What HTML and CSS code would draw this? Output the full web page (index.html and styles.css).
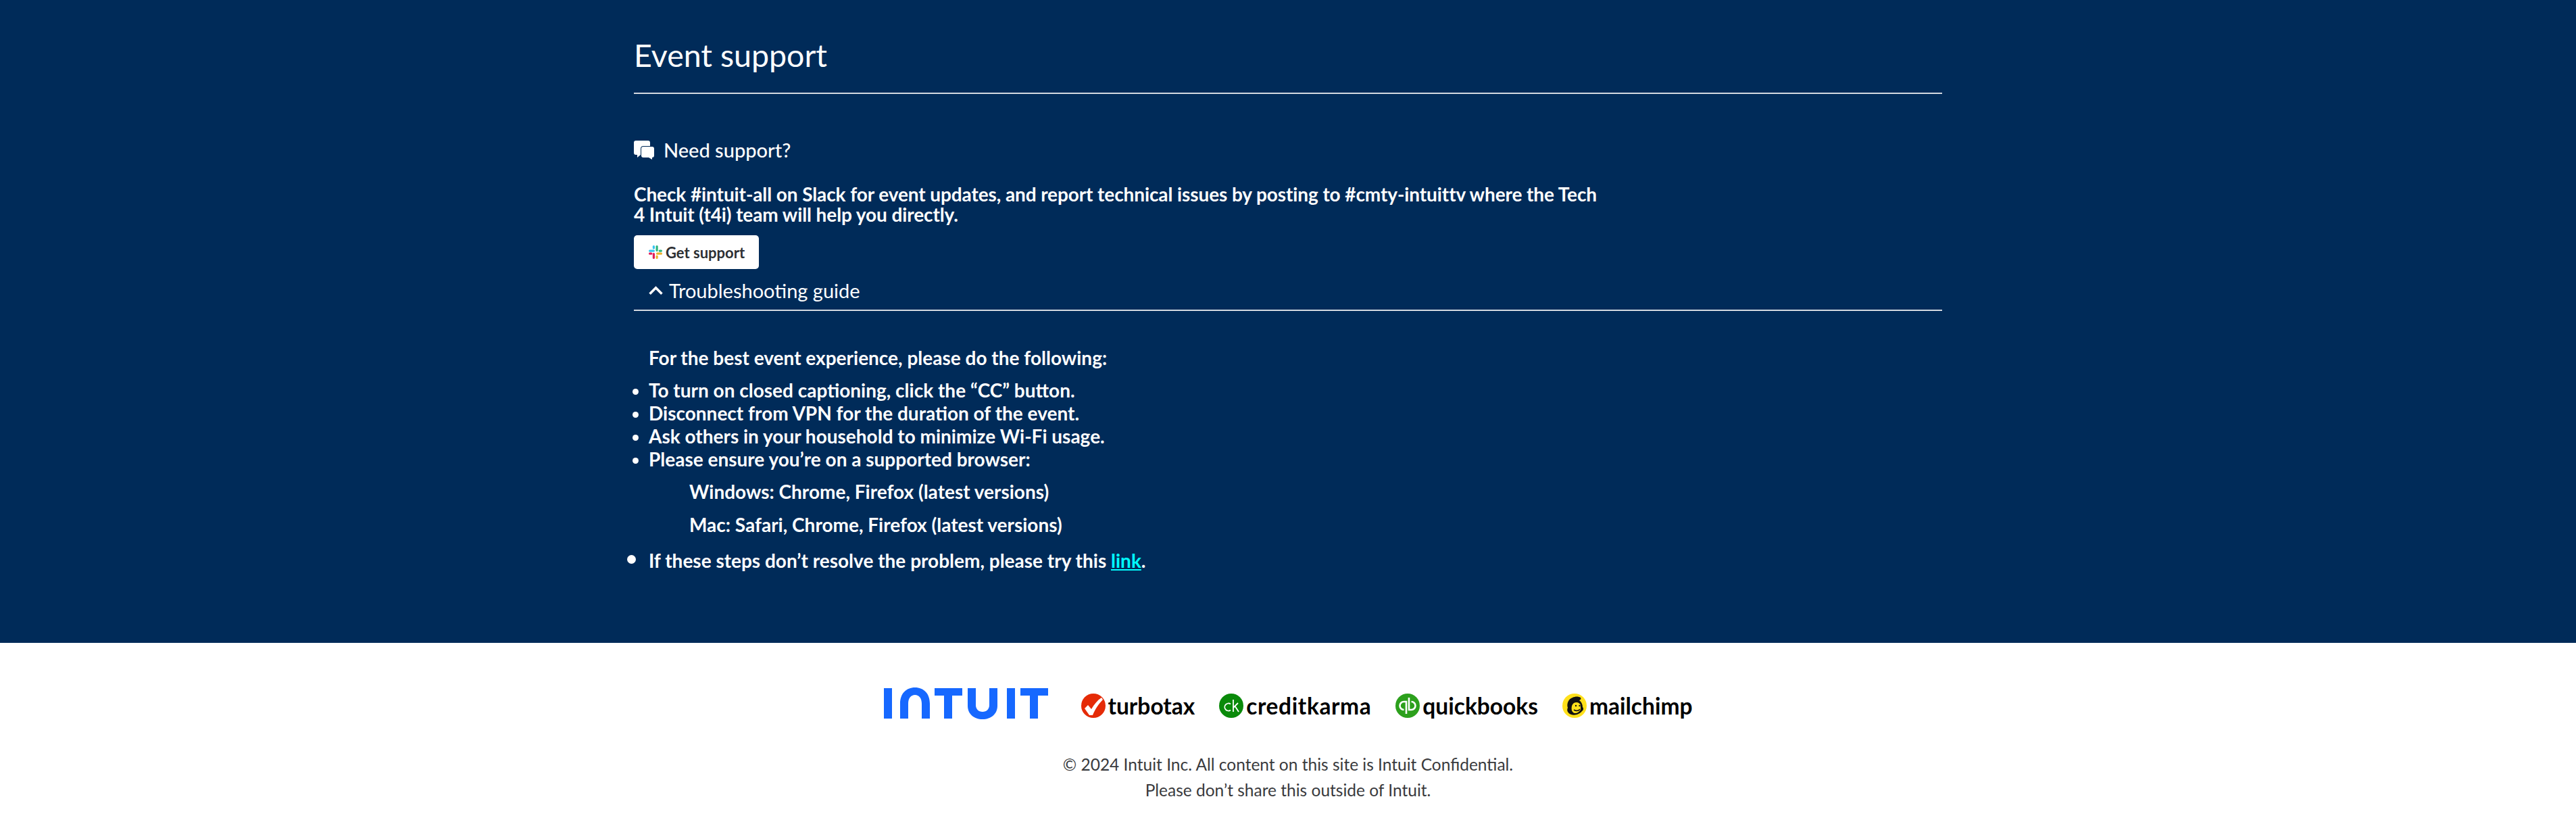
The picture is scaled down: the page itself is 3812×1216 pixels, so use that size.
FILE: index.html
```html
<!DOCTYPE html>
<html lang="en">
<head>
    <meta charset="UTF-8">
    <meta name="viewport" content="width=device-width, initial-scale=1.0">
    <title>Event support</title>
    <link rel="stylesheet" href="styles.css">
</head>
<body>
    <main class="support">
        <div class="container">
            <h2 class="title">Event support</h2>

            <div class="need-support">
                <svg class="chat-icon" viewBox="0 0 30 28">
                    <path d="M3 0h18a3 3 0 0 1 3 3v15a3 3 0 0 1-3 3H10l-5 4v-4H3a3 3 0 0 1-3-3V3a3 3 0 0 1 3-3z" fill="#fff"/>
                    <path d="M14 9h13a3 3 0 0 1 3 3v10a3 3 0 0 1-3 3v3l-5-3h-8a3 3 0 0 1-3-3V12a3 3 0 0 1 3-3z" fill="#fff" stroke="#002b59" stroke-width="2" paint-order="stroke"/>
                </svg>
                <span>Need support?</span>
            </div>

            <p class="intro">Check #intuit-all on Slack for event updates, and report technical issues by posting to #cmty-intuittv where the Tech 4 Intuit (t4i) team will help you directly.</p>

            <a class="support-btn" href="#">
                <svg class="slack-icon" viewBox="0 0 20 20">
                    <rect x="0" y="6.5" width="9" height="3.2" rx="1.6" fill="#36c5f0"/>
                    <rect x="5.8" y="0" width="3.2" height="5.5" rx="1.6" fill="#36c5f0"/>
                    <rect x="10.5" y="0" width="3.2" height="9" rx="1.6" fill="#2eb67d"/>
                    <rect x="14.6" y="6.5" width="5.4" height="3.2" rx="1.6" fill="#2eb67d"/>
                    <rect x="11" y="10.6" width="9" height="3.2" rx="1.6" fill="#ecb22e"/>
                    <rect x="10.5" y="14.6" width="3.2" height="5.4" rx="1.6" fill="#ecb22e"/>
                    <rect x="5.8" y="11" width="3.2" height="9" rx="1.6" fill="#e01e5a"/>
                    <rect x="0" y="10.6" width="5.4" height="3.2" rx="1.6" fill="#e01e5a"/>
                </svg>
                Get support
            </a>

            <div class="guide-head">
                <svg class="chevron" viewBox="0 0 20 12"><path d="M1.5 11L10 2.5l8.5 8.5" fill="none" stroke="#fff" stroke-width="3.4"/></svg>
                <span>Troubleshooting guide</span>
            </div>

            <div class="guide-body">
                <p class="guide-lead">For the best event experience, please do the following:</p>
                <ul class="steps">
                    <li>To turn on closed captioning, click the “CC” button.</li>
                    <li>Disconnect from VPN for the duration of the event.</li>
                    <li>Ask others in your household to minimize Wi-Fi usage.</li>
                    <li>Please ensure you’re on a supported browser:</li>
                </ul>
                <p class="browser">Windows: Chrome, Firefox (latest versions)</p>
                <p class="browser">Mac: Safari, Chrome, Firefox (latest versions)</p>
                <ul class="steps steps-last">
                    <li>If these steps don’t resolve the problem, please try this <a href="#">link</a>.</li>
                </ul>
            </div>
        </div>
    </main>

    <footer class="footer">
        <div class="logos">
            <svg class="intuit-logo" viewBox="0 0 243 47">
                <g fill="#1668ff">
                    <rect x="0" y="1" width="12" height="45"/>
                    <path d="M24 46V24C24 9 33 0 46 0s22 9 22 24v22H56V24c0-8-4-13-10-13s-10 5-10 13v22z"/>
                    <rect x="75" y="1" width="41" height="11"/>
                    <rect x="89" y="1" width="12" height="45"/>
                    <path d="M124 1h12v25c0 6 4 10 10 10s10-4 10-10V1h12v26c0 12-9 20-22 20s-22-8-22-20z"/>
                    <rect x="182" y="1" width="12" height="45"/>
                    <rect x="202" y="1" width="41" height="11"/>
                    <rect x="216" y="1" width="12" height="45"/>
                </g>
            </svg>

            <div class="brand">
                <svg class="brand-icon" viewBox="0 0 36 36">
                    <circle cx="18" cy="18" r="18" fill="#e52b07"/>
                    <path d="M5 22l5-5 5 6C19 16 24 10 30 6l2 3c-6 6-12 15-15 23h-5z" fill="#fff"/>
                </svg>
                <span>turbotax</span>
            </div>
            <div class="brand brand-ck">
                <svg class="brand-icon" viewBox="0 0 36 36">
                    <circle cx="18" cy="18" r="18" fill="#0a8a0a"/>
                    <path d="M17 15.5a5.5 5.5 0 1 0 0 9M21 9v18M28 14l-7 7M23.5 18.5l5.5 8.5" fill="none" stroke="#fff" stroke-width="1.8"/>
                </svg>
                <span>creditkarma</span>
            </div>
            <div class="brand">
                <svg class="brand-icon" viewBox="0 0 36 36">
                    <circle cx="18" cy="18" r="18" fill="#2ca01c"/>
                    <path d="M12.5 24a6 6 0 0 1 0-12H16v18M23.5 12a6 6 0 0 1 0 12H20V6" fill="none" stroke="#fff" stroke-width="2.6"/>
                </svg>
                <span>quickbooks</span>
            </div>
            <div class="brand">
                <svg class="brand-icon" viewBox="0 0 36 36">
                    <circle cx="18" cy="18" r="18" fill="#ffe01b"/>
                    <path d="M13 31C8 29 6 25 8 21 6 15 9 8 15 6c4-2 9-2 12 0 1 2 0 3-2 4 3 2 5 6 5 10 2 2 1 5-1 6-3 4-10 7-16 5z" fill="#111"/>
                    <path d="M14 25c-1-4 0-9 3-11 4-2 8-1 10 3l0 7c-2 3-5 5-8 5-3 0-4-2-5-4z" fill="#ffe01b"/>
                    <path d="M17 24c3 2 7 2 9-1" fill="none" stroke="#111" stroke-width="1.6"/>
                    <circle cx="20" cy="18" r="1.2" fill="#111"/>
                    <circle cx="25.500" cy="18" r="1.2" fill="#111"/>
                </svg>
                <span>mailchimp</span>
            </div>
        </div>
        <p class="legal">© 2024 Intuit Inc. All content on this site is Intuit Confidential.</p>
        <p class="legal">Please don’t share this outside of Intuit.</p>
    </footer>
</body>
</html>
```

FILE: styles.css
```css
body {
    font-family: Lato, "Open Sans", sans-serif;
    margin: 0;
    padding: 0;
    background-color: #fff;
    color: #fff;
}
p {
    margin: 0;
}

.support {
    background-color: #002b59;
    height: 951px;
    box-sizing: border-box;
    padding-top: 49px;
}
.container {
    width: 1936px;
    margin: 0 auto;
}
.title {
    font-size: 46.5px;
    font-weight: 400;
    line-height: 64px;
    margin: 0;
    padding-bottom: 24px;
    border-bottom: 2px solid #d4d9e0;
}

.need-support {
    display: flex;
    align-items: center;
    gap: 14px;
    margin-top: 65px;
    font-size: 29px;
    font-weight: 500;
    line-height: 36px;
}
.chat-icon {
    width: 30px;
    height: 28px;
}
.intro {
    max-width: 1440px;
    margin-top: 32px;
    font-size: 28px;
    font-weight: 700;
    letter-spacing: -0.1px;
    line-height: 30px;
}
.support-btn {
    display: flex;
    align-items: center;
    gap: 5px;
    width: 185px;
    height: 50px;
    box-sizing: border-box;
    margin-top: 16px;
    padding-left: 22px;
    background-color: #fff;
    border-radius: 5px;
    color: #2c2f33;
    font-size: 22px;
    font-weight: 700;
    text-decoration: none;
}
.slack-icon {
    width: 20px;
    height: 20px;
}

.guide-head {
    display: flex;
    align-items: center;
    gap: 9px;
    height: 62px;
    box-sizing: border-box;
    padding: 2px 0 0 22px;
    border-bottom: 2px solid #d4d9e0;
    font-size: 29px;
    font-weight: 400;
}
.chevron {
    width: 21px;
    height: 13px;
}

.guide-body {
    padding: 52px 0 0 22px;
    font-size: 28px;
    font-weight: 700;
    line-height: 34px;
}
.guide-lead {
    margin-bottom: 14px;
}
.steps {
    margin: 0;
    padding: 0;
}
.steps li::marker {
    font-size: 26px;
}
.steps-last {
    margin-top: 15px;
}
.steps-last li::marker {
    font-size: 38px;
}
.browser {
    margin: 14px 0 15px 60px;
}
.guide-body a {
    color: #0ff;
}

.footer {
    height: 265px;
    box-sizing: border-box;
    padding-top: 66px;
    color: #393a3d;
    text-align: center;
}
.logos {
    display: flex;
    justify-content: center;
    align-items: center;
    gap: 36px;
    height: 47px;
    margin-bottom: 48px;
}
.intuit-logo {
    width: 243px;
    height: 47px;
    margin-right: 13px;
}
.brand {
    display: flex;
    align-items: center;
    gap: 4px;
    margin-top: 7px;
    color: #000;
    font-size: 33.5px;
    font-weight: 700;
}
.brand-ck {
    letter-spacing: 0.6px;
}
.brand-icon {
    width: 36px;
    height: 36px;
}
.legal {
    font-size: 24.5px;
    font-weight: 400;
    line-height: 38px;
}
```
